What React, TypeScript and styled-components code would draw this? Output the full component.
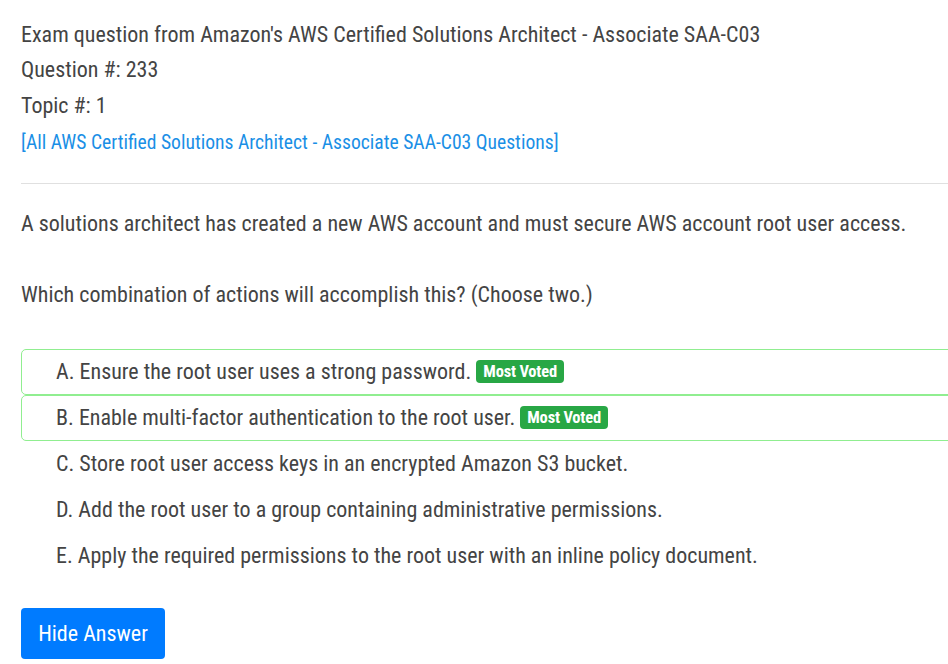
import * as React from 'react';
import styled, { createGlobalStyle } from 'styled-components';

const GlobalStyle = createGlobalStyle`
  html, body {
    margin: 0;
    padding: 0;
    overflow: hidden;
    background: #fff;
  }
  body {
    font-family: Roboto, "Liberation Sans", sans-serif;
    font-stretch: condensed;
    color: #444;
  }
`;

const Page = styled.main`
  width: 960px;
  padding: 17px 0 0 21px;
`;

const Header = styled.div`
  display: flex;
  flex-direction: column;
  padding-bottom: 23px;
  border-bottom: 1px solid #e0e0e0;
`;

const HeaderLine = styled.div`
  font-size: 22px;
  line-height: 35.3px;
`;

const AllLink = styled.a`
  margin-top: 2px;
  font-size: 19.6px;
  line-height: 35px;
  color: #1a8fe6;
  text-decoration: none;
`;

const Body = styled.section`
  padding-top: 22px;
`;

const Paragraph = styled.p<{ $gap?: number }>`
  margin: 0 0 ${p => p.$gap ?? 0}px;
  font-size: 22px;
  line-height: 35px;
`;

const Choices = styled.ul`
  list-style: none;
  margin: 37px 0 0;
  padding: 0;
  display: flex;
  flex-direction: column;
`;

const Choice = styled.li<{ $correct?: boolean }>`
  display: flex;
  align-items: center;
  box-sizing: border-box;
  height: 46px;
  padding-left: 34px;
  border: 1px solid ${p => (p.$correct ? '#90ee90' : 'transparent')};
  border-radius: 5px;
  font-size: 22px;
`;

const Badge = styled.span`
  display: inline-flex;
  align-items: center;
  height: 23px;
  margin-left: 5px;
  padding: 0 7px;
  border-radius: 4px;
  background: #28a745;
  color: #fff;
  font-size: 16.5px;
  font-weight: 700;
  letter-spacing: -0.2px;
`;

const HideButton = styled.button`
  display: block;
  margin-top: 29px;
  width: 144px;
  height: 51px;
  padding: 0;
  border: none;
  border-radius: 4px;
  background: #007bff;
  color: #fff;
  font-family: Roboto, "Liberation Sans", sans-serif;
  font-stretch: condensed;
  font-size: 22px;
  cursor: pointer;
`;

const choices = [
  { letter: 'A', text: 'Ensure the root user uses a strong password.', voted: true },
  { letter: 'B', text: 'Enable multi-factor authentication to the root user.', voted: true },
  { letter: 'C', text: 'Store root user access keys in an encrypted Amazon S3 bucket.' },
  { letter: 'D', text: 'Add the root user to a group containing administrative permissions.' },
  { letter: 'E', text: 'Apply the required permissions to the root user with an inline policy document.' },
];

const App = () => (
  <>
    <GlobalStyle />
    <Page>
      <Header>
        <HeaderLine>Exam question from Amazon's AWS Certified Solutions Architect - Associate SAA-C03</HeaderLine>
        <HeaderLine>Question #: 233</HeaderLine>
        <HeaderLine>Topic #: 1</HeaderLine>
        <AllLink href="#">[All AWS Certified Solutions Architect - Associate SAA-C03 Questions]</AllLink>
      </Header>
      <Body>
        <Paragraph $gap={35.7}>
          A solutions architect has created a new AWS account and must secure AWS account root user access.
        </Paragraph>
        <Paragraph>Which combination of actions will accomplish this? (Choose two.)</Paragraph>
        <Choices>
          {choices.map(c => (
            <Choice key={c.letter} $correct={c.voted}>
              {c.letter}. {c.text}
              {c.voted && <Badge>Most Voted</Badge>}
            </Choice>
          ))}
        </Choices>
        <HideButton>Hide Answer</HideButton>
      </Body>
    </Page>
  </>
);

export default App;
